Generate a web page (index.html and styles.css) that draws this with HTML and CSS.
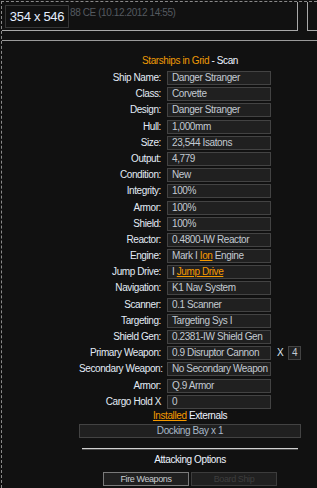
FILE: index.html
```html
<!DOCTYPE html>
<html>
<head>
<meta charset="utf-8">
<link rel="stylesheet" href="styles.css">
</head>
<body>
<div class="frame">
  <header class="top">
    <div class="panel-main">
      <span class="date">88 CE (10.12.2012 14:55)</span>
      <div class="size-tip">354 x 546</div>
    </div>
    <div class="panel-side"></div>
  </header>
  <div class="rule"></div>
  <main class="content">
    <h1 class="title"><span class="orange">Starships in Grid</span> - Scan</h1>
    <div class="form">
      <div class="lbl">Ship Name:</div><div class="val">Danger Stranger</div>
      <div class="lbl">Class:</div><div class="val">Corvette</div>
      <div class="lbl">Design:</div><div class="val">Danger Stranger</div>
      <div class="lbl">Hull:</div><div class="val">1,000mm</div>
      <div class="lbl">Size:</div><div class="val">23,544 Isatons</div>
      <div class="lbl">Output:</div><div class="val">4,779</div>
      <div class="lbl">Condition:</div><div class="val">New</div>
      <div class="lbl">Integrity:</div><div class="val">100%</div>
      <div class="lbl">Armor:</div><div class="val">100%</div>
      <div class="lbl">Shield:</div><div class="val">100%</div>
      <div class="lbl">Reactor:</div><div class="val">0.4800-IW Reactor</div>
      <div class="lbl">Engine:</div><div class="val">Mark I <a class="link">Ion</a> Engine</div>
      <div class="lbl">Jump Drive:</div><div class="val">I <a class="link">Jump Drive</a></div>
      <div class="lbl">Navigation:</div><div class="val">K1 Nav System</div>
      <div class="lbl">Scanner:</div><div class="val">0.1 Scanner</div>
      <div class="lbl">Targeting:</div><div class="val">Targeting Sys I</div>
      <div class="lbl">Shield Gen:</div><div class="val">0.2381-IW Shield Gen</div>
      <div class="lbl">Primary Weapon:</div><div class="val">0.9 Disruptor Cannon</div><div class="x">X</div><div class="qty">4</div>
      <div class="lbl">Secondary Weapon:</div><div class="val">No Secondary Weapon</div>
      <div class="lbl">Armor:</div><div class="val">Q.9 Armor</div>
      <div class="lbl">Cargo Hold X</div><div class="val">0</div>
    </div>
    <p class="externals"><a class="link">Installed</a> Externals</p>
    <div class="bay">Docking Bay x 1</div>
    <div class="divider"></div>
    <p class="attack">Attacking Options</p>
    <div class="buttons">
      <button class="btn">Fire Weapons</button>
      <button class="btn disabled">Board Ship</button>
    </div>
  </main>
</div>
</body>
</html>
```

FILE: styles.css
```css
html, body {
  margin: 0;
  padding: 0;
  background: #111111;
}
body {
  font-family: "Liberation Sans", Arial, sans-serif;
  font-size: 10px;
  letter-spacing: -0.4px;
  color: #dfe8f2;
  height: 488px;
  overflow: hidden;
}
.frame {
  margin: 1px 0 0 1px;
  border-top: 1px dashed #8a8a8a;
  border-left: 1px dashed #8a8a8a;
  height: 486px;
}
.top {
  display: flex;
  gap: 9px;
  height: 29px;
}
.panel-main {
  position: relative;
  border-right: 1px solid #a8a8a8;
  border-bottom: 1px solid #a8a8a8;
  padding: 4px 0 0 68px;
  box-sizing: content-box;
  height: 24px;
  width: 227px;
}
.date {
  display: block;
  line-height: 14px;
  color: #555a60;
  white-space: nowrap;
}
.size-tip {
  position: absolute;
  left: 3px;
  top: 3px;
  width: 64px;
  height: 23px;
  box-sizing: border-box;
  border: 1px solid #363636;
  background: #111111;
  color: #e4eeff;
  font-size: 13px;
  letter-spacing: -0.3px;
  line-height: 21px;
  text-align: center;
}
.panel-side {
  flex: 1;
  border-left: 1px solid #a8a8a8;
  border-bottom: 1px solid #a8a8a8;
}
.rule {
  margin-top: 9px;
  border-top: 1px solid #9a9a9a;
}
.content {
  margin-left: 77px;
  width: 222px;
}
.title {
  margin: 13px 0 0 0;
  font-size: 10px;
  font-weight: normal;
  line-height: 14px;
  text-align: center;
  color: #eef4ff;
}
.orange {
  color: #ee9a06;
}
.form {
  margin-top: 3px;
  display: grid;
  grid-template-columns: 82px 104px 5px 13px;
  column-gap: 6px;
  row-gap: 2.2px;
  grid-auto-rows: 14px;
}
.lbl {
  grid-column: 1;
  text-align: right;
  line-height: 14px;
  white-space: nowrap;
  color: #e3ecf6;
}
.val {
  grid-column: 2;
  box-sizing: border-box;
  height: 14px;
  border: 1px solid #434343;
  background: #202020;
  padding: 0 4px;
  line-height: 12px;
  white-space: nowrap;
  overflow: hidden;
  color: #c3cad2;
}
.x {
  grid-column: 3;
  line-height: 14px;
  color: #dfe8f2;
}
.qty {
  grid-column: 4;
  box-sizing: border-box;
  height: 14px;
  border: 1px solid #434343;
  background: #202020;
  line-height: 12px;
  text-align: center;
  color: #c3cad2;
}
.link {
  color: #f59a00;
  text-decoration: underline;
}
.externals {
  margin: 0;
  line-height: 14px;
  text-align: center;
  color: #eef4ff;
}
.bay {
  margin-top: 1px;
  box-sizing: border-box;
  height: 14px;
  border: 1px solid #434343;
  background: #202020;
  line-height: 12px;
  text-align: center;
  color: #a9b8c8;
}
.divider {
  margin: 10px 3px 0 3px;
  border-top: 1px solid #d0d0d0;
  border-bottom: 1px solid #4a4a4a;
}
.attack {
  margin: 3px 0 0 0;
  line-height: 14px;
  text-align: center;
  color: #eef4ff;
}
.buttons {
  margin-top: 5px;
  display: flex;
  justify-content: center;
  gap: 2px;
}
.btn {
  width: 86px;
  height: 14px;
  box-sizing: border-box;
  margin: 0;
  padding: 0;
  border: 1px solid #7a7a7a;
  background: #202020;
  color: #c8ccd0;
  font-family: "Liberation Sans", Arial, sans-serif;
  font-size: 9px;
  letter-spacing: -0.4px;
  line-height: 12px;
}
.btn.disabled {
  border-color: #3c3c3c;
  color: #3e3e3e;
}
```
